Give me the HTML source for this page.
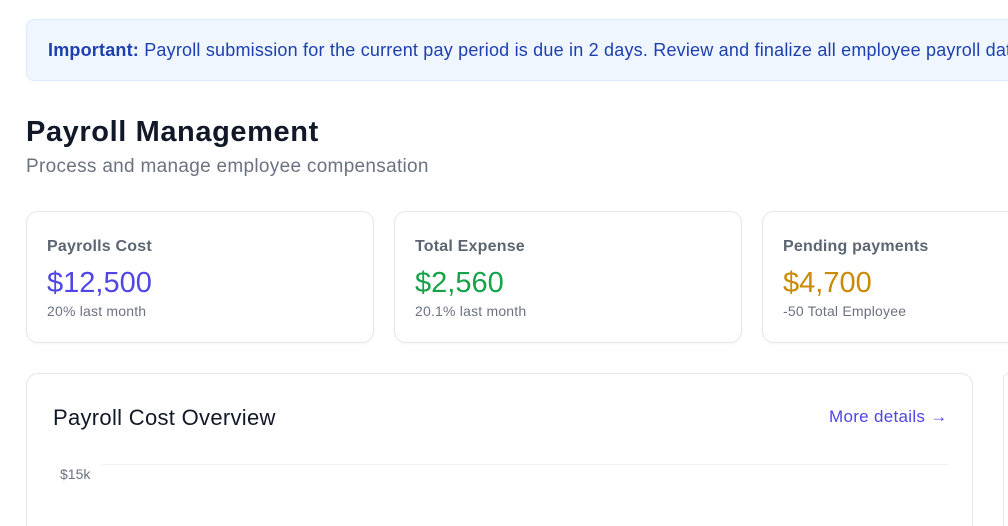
<!DOCTYPE html>
<html><head><style>
*{box-sizing:border-box;margin:0;padding:0}
html,body{width:1008px;height:526px;overflow:hidden}
body{background:#fff;font-family:"Liberation Sans",sans-serif;position:relative}
.ab{position:absolute}
.banner{left:26px;top:19px;width:982px;height:62px;background:#eff6ff;border:1px solid #dbeafe;border-right:none;border-radius:8px 0 0 8px;color:#1e40af;font-size:18px;padding:20px 0 0 21px;white-space:nowrap;overflow:hidden;letter-spacing:0.2px}
.card{border:1px solid #e5e7eb;border-radius:12px;background:#fff;box-shadow:0 1px 2px rgba(0,0,0,.04)}
.lbl{font-size:16px;color:#4b5563;font-weight:600;opacity:.9;letter-spacing:0.2px}
.val{font-size:29px;margin-top:9px;line-height:36px}
.sub{font-size:14px;color:#6b7280;margin-top:2px;letter-spacing:0.2px}
</style></head><body>
<div class="ab banner"><b>Important:</b> Payroll submission for the current pay period is due in 2 days. Review and finalize all employee payroll data.</div>
<div class="ab" style="left:26px;top:116px;font-size:29px;font-weight:700;color:#111827;letter-spacing:0.6px">Payroll Management</div>
<div class="ab" style="left:26px;top:156px;font-size:19px;color:#6b7280;letter-spacing:0.3px">Process and manage employee compensation</div>

<div class="ab card" style="left:26px;top:211px;width:348px;height:132px;padding:26px 20px">
<div class="lbl">Payrolls Cost</div><div class="val" style="color:#4f46e5">$12,500</div><div class="sub">20% last month</div></div>
<div class="ab card" style="left:394px;top:211px;width:348px;height:132px;padding:26px 20px">
<div class="lbl">Total Expense</div><div class="val" style="color:#16a34a">$2,560</div><div class="sub">20.1% last month</div></div>
<div class="ab card" style="left:762px;top:211px;width:246px;height:132px;padding:26px 20px;border-right:none;border-radius:12px 0 0 12px">
<div class="lbl">Pending payments</div><div class="val" style="color:#ca8a04">$4,700</div><div class="sub">-50 Total Employee</div></div>

<div class="ab card" style="left:26px;top:373px;width:947px;height:153px;border-bottom:none;border-radius:12px 12px 0 0"></div>
<div class="ab card" style="left:1003px;top:373px;width:5px;height:153px;border-right:none;border-bottom:none;border-radius:12px 0 0 0"></div>
<div class="ab" style="left:53px;top:405px;font-size:22px;color:#111827;letter-spacing:0.3px">Payroll Cost Overview</div>
<div class="ab" style="left:829px;top:407px;font-size:17px;color:#4f46e5;letter-spacing:0.3px">More details →</div>
<div class="ab" style="left:102px;top:464px;width:846px;height:1px;background:#f0f0f0"></div>
<div class="ab" style="left:60px;top:466px;font-size:14px;color:#6b7280">$15k</div>
</body></html>
